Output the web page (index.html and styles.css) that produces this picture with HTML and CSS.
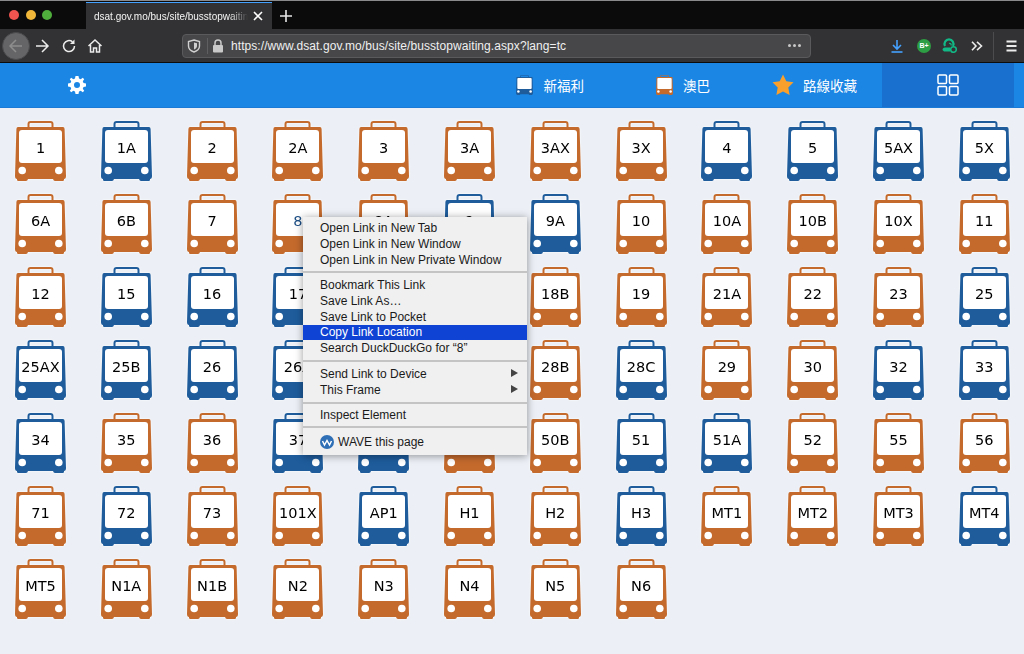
FILE: index.html
```html
<html>
<head>
<meta charset="utf-8">
<link rel="stylesheet" href="styles.css">
</head>
<body>
<svg class="defs" width="0" height="0">
  <symbol id="bus" viewBox="0 0 51 60">
    <rect x="13.500" y="1" width="24" height="7" rx="2" fill="none" stroke="currentColor" stroke-width="2"/>
    <path fill="currentColor" d="M3 6H48Q49.500 6 49.600 8L51 55Q51 58 49 58V59Q49 60 47.500 60H40Q38.500 60 38 58H13Q12.500 60 11 60H3.500Q2 60 2 59V58Q0 58 0 55L1.400 8Q1.500 6 3 6Z"/>
    <rect x="4" y="9" width="43" height="33" rx="3" fill="#fff"/>
    <circle cx="7.200" cy="49.500" r="3.800" fill="#fff"/>
    <circle cx="43.800" cy="49.500" r="3.800" fill="#fff"/>
  </symbol>
</svg>

<div class="tabstrip">
  <div class="lights"><i class="red"></i><i class="yellow"></i><i class="green"></i></div>
  <div class="tab">
    <span class="tabtitle">dsat.gov.mo/bus/site/busstopwaiting.aspx?lang=tc</span>
    <svg width="12" height="12" viewBox="0 0 12 12"><path d="M2 2L10 10M10 2L2 10" stroke="#fff" stroke-width="1.600" fill="none"/></svg>
  </div>
  <svg class="newtab" width="14" height="14" viewBox="0 0 14 14"><path d="M7 1V13M1 7H13" stroke="#e6e6e6" stroke-width="1.600"/></svg>
</div>

<div class="toolbar">
  <div class="backbtn">
    <svg width="16" height="16" viewBox="0 0 16 16"><path d="M14 8H2M8 2L2 8L8 14" stroke="#8d8d8d" stroke-width="1.500" fill="none"/></svg>
  </div>
  <svg class="tool fwd" width="16" height="16" viewBox="0 0 16 16"><path d="M2 8H14M8 2L14 8L8 14" stroke="#ececec" stroke-width="1.500" fill="none"/></svg>
  <svg class="tool reload" width="16" height="16" viewBox="0 0 16 16"><path d="M13.500 8A5.500 5.500 0 1 1 11.500 3.800" stroke="#ececec" stroke-width="1.500" fill="none"/><path d="M13.500 1.500V6H9Z" fill="#ececec"/></svg>
  <svg class="tool home" width="16" height="16" viewBox="0 0 16 16"><path d="M1.500 8L8 2L14.500 8M3.500 7V14H6.500V10H9.500V14H12.500V7" stroke="#ececec" stroke-width="1.500" fill="none"/></svg>
  <div class="urlbar">
    <svg width="14" height="14" viewBox="0 0 14 14"><path d="M7 1L12.500 2.500V7C12.500 10 10 12 7 13C4 12 1.500 10 1.500 7V2.500Z" stroke="#d0d0d0" stroke-width="1.400" fill="none"/><path d="M7 3.500L10 4.300V7C10 8.700 8.700 9.800 7 10.500Z" fill="#d0d0d0"/></svg>
    <span class="urlsep"></span>
    <svg width="12" height="14" viewBox="0 0 12 14"><path d="M3 6V4A3 3 0 0 1 9 4V6" stroke="#c9c9c9" stroke-width="1.500" fill="none"/><rect x="1" y="6" width="10" height="7.500" rx="1" fill="#c9c9c9"/></svg>
    <span class="url">https://www.dsat.gov.mo/bus/site/busstopwaiting.aspx?lang=tc</span>
    <span class="dots"><i></i><i></i><i></i></span>
  </div>
  <svg class="ext dl" width="12" height="14" viewBox="0 0 12 14"><path d="M6 1V10M2 6L6 10L10 6" stroke="#45a1ff" stroke-width="1.600" fill="none"/><path d="M0.500 13H11.500" stroke="#45a1ff" stroke-width="1.600"/></svg>
  <span class="ext badge">B+</span>
  <svg class="ext pocketish" width="15" height="15" viewBox="0 0 15 15"><path d="M3 8A4.500 4.500 0 1 1 11 8" stroke="#12b886" stroke-width="2.200" fill="none"/><path d="M0.500 12Q0.500 9.500 3 9.500H8V13.500H2Z" fill="#12b886"/><circle cx="11.500" cy="11.500" r="2.800" stroke="#12b886" stroke-width="1.500" fill="#323234"/><path d="M7 5.500A1.500 1.500 0 0 1 9 7.500" stroke="#12b886" stroke-width="1.200" fill="none"/></svg>
  <svg class="ext more" width="12" height="10" viewBox="0 0 12 10"><path d="M1 0.800L5 5L1 9.200M6 0.800L10.500 5L6 9.200" stroke="#ececec" stroke-width="1.600" fill="none"/></svg>
  <span class="toolsep"></span>
  <svg class="ext menuicon" width="11" height="12" viewBox="0 0 11 12"><path d="M0.500 1.500H10.500M0.500 6H10.500M0.500 10.500H10.500" stroke="#ececec" stroke-width="1.800"/></svg>
</div>

<div class="header">
  <svg class="gear" width="18" height="18" viewBox="0 0 18 18"><path fill="#fff" fill-rule="evenodd" d="M7.500 0H10.500L11 2.500L12.700 3.200L14.800 1.800L16.200 3.200L14.800 5.300L15.500 7L18 7.500V10.500L15.500 11L14.800 12.700L16.200 14.800L14.800 16.200L12.700 14.800L11 15.500L10.500 18H7.500L7 15.500L5.300 14.800L3.200 16.200L1.800 14.800L3.200 12.700L2.500 11L0 10.500V7.500L2.500 7L3.200 5.300L1.800 3.200L3.200 1.800L5.300 3.200L7 2.500ZM9 6A3 3 0 1 0 9 12A3 3 0 1 0 9 6Z"/></svg>
  <div class="nav">
    <a class="navitem navnew"><svg class="blue" width="17" height="20"><use href="#bus"/></svg>新福利</a>
    <a class="navitem navtcm"><svg class="orange" width="17" height="20"><use href="#bus"/></svg>澳巴</a>
    <a class="navitem navfav"><svg width="22" height="22" viewBox="0 0 22 22"><path fill="#f9a02c" d="M11 0.500L14.300 7.300L21.500 8.300L16.300 13.400L17.600 21L11 17.400L4.400 21L5.700 13.400L0.500 8.300L7.700 7.300Z"/></svg>路線收藏</a>
    <a class="navgrid"><svg width="22" height="22" viewBox="0 0 22 22"><g fill="none" stroke="#fff" stroke-width="1.500"><rect x="1" y="1" width="8.500" height="8.500" rx="1"/><rect x="12.500" y="1" width="8.500" height="8.500" rx="1"/><rect x="1" y="12.500" width="8.500" height="8.500" rx="1"/><rect x="12.500" y="12.500" width="8.500" height="8.500" rx="1"/></g></svg></a>
  </div>
</div>

<div class="routes">
  <a class="bus orange"><svg><use href="#bus"/></svg><span>1</span></a>
  <a class="bus blue"><svg><use href="#bus"/></svg><span>1A</span></a>
  <a class="bus orange"><svg><use href="#bus"/></svg><span>2</span></a>
  <a class="bus orange"><svg><use href="#bus"/></svg><span>2A</span></a>
  <a class="bus orange"><svg><use href="#bus"/></svg><span>3</span></a>
  <a class="bus orange"><svg><use href="#bus"/></svg><span>3A</span></a>
  <a class="bus orange"><svg><use href="#bus"/></svg><span>3AX</span></a>
  <a class="bus orange"><svg><use href="#bus"/></svg><span>3X</span></a>
  <a class="bus blue"><svg><use href="#bus"/></svg><span>4</span></a>
  <a class="bus blue"><svg><use href="#bus"/></svg><span>5</span></a>
  <a class="bus blue"><svg><use href="#bus"/></svg><span>5AX</span></a>
  <a class="bus blue"><svg><use href="#bus"/></svg><span>5X</span></a>

  <a class="bus orange"><svg><use href="#bus"/></svg><span>6A</span></a>
  <a class="bus orange"><svg><use href="#bus"/></svg><span>6B</span></a>
  <a class="bus orange"><svg><use href="#bus"/></svg><span>7</span></a>
  <a class="bus orange hover"><svg><use href="#bus"/></svg><span>8</span></a>
  <a class="bus orange"><svg><use href="#bus"/></svg><span>8A</span></a>
  <a class="bus blue"><svg><use href="#bus"/></svg><span>9</span></a>
  <a class="bus blue"><svg><use href="#bus"/></svg><span>9A</span></a>
  <a class="bus orange"><svg><use href="#bus"/></svg><span>10</span></a>
  <a class="bus orange"><svg><use href="#bus"/></svg><span>10A</span></a>
  <a class="bus orange"><svg><use href="#bus"/></svg><span>10B</span></a>
  <a class="bus orange"><svg><use href="#bus"/></svg><span>10X</span></a>
  <a class="bus orange"><svg><use href="#bus"/></svg><span>11</span></a>

  <a class="bus orange"><svg><use href="#bus"/></svg><span>12</span></a>
  <a class="bus blue"><svg><use href="#bus"/></svg><span>15</span></a>
  <a class="bus blue"><svg><use href="#bus"/></svg><span>16</span></a>
  <a class="bus blue"><svg><use href="#bus"/></svg><span>17</span></a>
  <a class="bus orange"><svg><use href="#bus"/></svg><span>18</span></a>
  <a class="bus orange"><svg><use href="#bus"/></svg><span>18A</span></a>
  <a class="bus orange"><svg><use href="#bus"/></svg><span>18B</span></a>
  <a class="bus orange"><svg><use href="#bus"/></svg><span>19</span></a>
  <a class="bus orange"><svg><use href="#bus"/></svg><span>21A</span></a>
  <a class="bus orange"><svg><use href="#bus"/></svg><span>22</span></a>
  <a class="bus orange"><svg><use href="#bus"/></svg><span>23</span></a>
  <a class="bus blue"><svg><use href="#bus"/></svg><span>25</span></a>

  <a class="bus blue"><svg><use href="#bus"/></svg><span>25AX</span></a>
  <a class="bus blue"><svg><use href="#bus"/></svg><span>25B</span></a>
  <a class="bus blue"><svg><use href="#bus"/></svg><span>26</span></a>
  <a class="bus blue"><svg><use href="#bus"/></svg><span>26A</span></a>
  <a class="bus orange"><svg><use href="#bus"/></svg><span>27</span></a>
  <a class="bus orange"><svg><use href="#bus"/></svg><span>28A</span></a>
  <a class="bus orange"><svg><use href="#bus"/></svg><span>28B</span></a>
  <a class="bus blue"><svg><use href="#bus"/></svg><span>28C</span></a>
  <a class="bus orange"><svg><use href="#bus"/></svg><span>29</span></a>
  <a class="bus orange"><svg><use href="#bus"/></svg><span>30</span></a>
  <a class="bus blue"><svg><use href="#bus"/></svg><span>32</span></a>
  <a class="bus blue"><svg><use href="#bus"/></svg><span>33</span></a>

  <a class="bus blue"><svg><use href="#bus"/></svg><span>34</span></a>
  <a class="bus orange"><svg><use href="#bus"/></svg><span>35</span></a>
  <a class="bus orange"><svg><use href="#bus"/></svg><span>36</span></a>
  <a class="bus blue"><svg><use href="#bus"/></svg><span>37</span></a>
  <a class="bus blue"><svg><use href="#bus"/></svg><span>39</span></a>
  <a class="bus orange"><svg><use href="#bus"/></svg><span>50A</span></a>
  <a class="bus orange"><svg><use href="#bus"/></svg><span>50B</span></a>
  <a class="bus blue"><svg><use href="#bus"/></svg><span>51</span></a>
  <a class="bus blue"><svg><use href="#bus"/></svg><span>51A</span></a>
  <a class="bus orange"><svg><use href="#bus"/></svg><span>52</span></a>
  <a class="bus orange"><svg><use href="#bus"/></svg><span>55</span></a>
  <a class="bus orange"><svg><use href="#bus"/></svg><span>56</span></a>

  <a class="bus orange"><svg><use href="#bus"/></svg><span>71</span></a>
  <a class="bus blue"><svg><use href="#bus"/></svg><span>72</span></a>
  <a class="bus orange"><svg><use href="#bus"/></svg><span>73</span></a>
  <a class="bus orange"><svg><use href="#bus"/></svg><span>101X</span></a>
  <a class="bus blue"><svg><use href="#bus"/></svg><span>AP1</span></a>
  <a class="bus orange"><svg><use href="#bus"/></svg><span>H1</span></a>
  <a class="bus orange"><svg><use href="#bus"/></svg><span>H2</span></a>
  <a class="bus blue"><svg><use href="#bus"/></svg><span>H3</span></a>
  <a class="bus orange"><svg><use href="#bus"/></svg><span>MT1</span></a>
  <a class="bus orange"><svg><use href="#bus"/></svg><span>MT2</span></a>
  <a class="bus orange"><svg><use href="#bus"/></svg><span>MT3</span></a>
  <a class="bus blue"><svg><use href="#bus"/></svg><span>MT4</span></a>

  <a class="bus orange"><svg><use href="#bus"/></svg><span>MT5</span></a>
  <a class="bus orange"><svg><use href="#bus"/></svg><span>N1A</span></a>
  <a class="bus orange"><svg><use href="#bus"/></svg><span>N1B</span></a>
  <a class="bus orange"><svg><use href="#bus"/></svg><span>N2</span></a>
  <a class="bus orange"><svg><use href="#bus"/></svg><span>N3</span></a>
  <a class="bus orange"><svg><use href="#bus"/></svg><span>N4</span></a>
  <a class="bus orange"><svg><use href="#bus"/></svg><span>N5</span></a>
  <a class="bus orange"><svg><use href="#bus"/></svg><span>N6</span></a>
</div>

<div class="ctxmenu">
  <div class="ctxitem">Open Link in New Tab</div>
  <div class="ctxitem">Open Link in New Window</div>
  <div class="ctxitem">Open Link in New Private Window</div>
  <div class="ctxsep"></div>
  <div class="ctxitem">Bookmark This Link</div>
  <div class="ctxitem">Save Link As…</div>
  <div class="ctxitem">Save Link to Pocket</div>
  <div class="ctxitem selected">Copy Link Location</div>
  <div class="ctxitem">Search DuckDuckGo for “8”</div>
  <div class="ctxsep sepwide"></div>
  <div class="ctxitem sub">Send Link to Device</div>
  <div class="ctxitem sub">This Frame</div>
  <div class="ctxsep sepnarrow"></div>
  <div class="ctxitem">Inspect Element</div>
  <div class="ctxsep"></div>
  <div class="ctxitem wave">
    <svg width="14" height="14" viewBox="0 0 14 14"><circle cx="7" cy="7" r="7" fill="#2f6fb5"/><path d="M2.500 6L4.500 10L7 5.500L9.500 10L11.500 6" stroke="#fff" stroke-width="1.500" fill="none"/></svg>
    WAVE this page
  </div>
</div>
</body></html>
```

FILE: styles.css
```css
html, body {
  margin: 0;
  height: 654px;
  overflow: hidden;
}
body {
  background-color: #ecf0f6;
  font-family: "Liberation Sans", Arial, sans-serif;
  position: relative;
}
.defs { display: block; }

/* browser chrome */
.tabstrip {
  display: flex;
  align-items: center;
  height: 27px;
  padding-top: 2px;
  background-color: #0b0b0c;
  box-shadow: inset 0 1px 0 #8a8a8c;
}
.lights {
  display: flex;
  gap: 6.500px;
  width: 86px;
  padding-left: 9px;
  box-sizing: border-box;
  margin-top: -1px;
}
.lights i {
  width: 10px;
  height: 10px;
  border-radius: 50%;
}
.red { background-color: #f0544f; }
.yellow { background-color: #f0b73a; }
.green { background-color: #4fae3c; }
.tab {
  display: flex;
  align-items: center;
  width: 186px;
  height: 27px;
  margin-top: -1px;
  padding: 1px 8px 0 8px;
  box-sizing: border-box;
  background-color: #323234;
  border-top: 1px solid #45a1ff;
  color: #f4f4f4;
  font-size: 10px;
  gap: 4px;
}
.tabtitle {
  flex: 1;
  overflow: hidden;
  white-space: nowrap;
  -webkit-mask-image: linear-gradient(to right, #000 88%, transparent);
}
.newtab { margin-left: 7px; }

.toolbar {
  display: flex;
  align-items: center;
  height: 33px;
  background-color: #323234;
  border-bottom: 1px solid #0c0c0d;
}
.backbtn {
  display: flex;
  align-items: center;
  justify-content: center;
  width: 26px;
  height: 26px;
  margin-left: 2px;
  border-radius: 50%;
  background-color: #656567;
  border: 1px solid #4a4a4c;
}
.tool { flex: none; }
.fwd { margin-left: 4px; }
.reload { margin-left: 11px; }
.home { margin-left: 10px; }
.urlbar {
  display: flex;
  align-items: center;
  width: 629px;
  height: 24px;
  margin-left: 79px;
  padding: 0 9px 0 4px;
  box-sizing: border-box;
  background-color: #474749;
  border: 1px solid #5a5a5c;
  border-radius: 4px;
}
.urlsep {
  width: 1px;
  height: 16px;
  margin: 0 4px 0 6px;
  background-color: #5f5f61;
}
.url {
  flex: 1;
  margin-left: 7px;
  color: #f0f0f0;
  font-size: 12px;
  letter-spacing: 0.070px;
  white-space: nowrap;
}
.dots { display: flex; gap: 2px; }
.dots i {
  width: 3px;
  height: 3px;
  border-radius: 50%;
  background-color: #c8c8c8;
}
.ext { flex: none; margin-left: 12px; }
.dl { margin-left: 80px; }
.badge {
  width: 14px;
  height: 14px;
  margin-left: 14px;
  border-radius: 50%;
  background-color: #2e9e44;
  color: #fff;
  font-size: 7px;
  font-weight: bold;
  line-height: 14px;
  text-align: center;
}
.pocketish { margin-left: 11px; }
.more { margin-left: 14px; }
.toolsep {
  width: 1px;
  height: 28px;
  margin-left: 10px;
  background-color: #4c4c4e;
}
.menuicon { margin-left: 12px; }

/* site header */
.header {
  display: flex;
  align-items: center;
  height: 44px;
  background-color: #1b86e4;
  border-bottom: 1px solid #1a7ad6;
}
.gear { margin-left: 68px; }
.nav {
  display: flex;
  align-items: center;
  height: 100%;
  margin-left: auto;
  margin-right: 10px;
}
.navitem {
  display: flex;
  align-items: center;
  color: #fff;
  font-family: "Noto Sans CJK TC", sans-serif;
  font-size: 13.500px;
}
.navitem svg { margin-right: 11px; }
.navtcm svg { margin-right: 10px; }
.navfav svg { margin-right: 9px; }
.navtcm { margin-left: 72px; }
.navfav { margin-left: 62px; }
.navgrid {
  display: flex;
  align-items: center;
  justify-content: center;
  width: 132px;
  height: 100%;
  margin-left: 25px;
  background-color: #1a70cf;
}

/* route grid */
.routes {
  display: grid;
  grid-template-columns: repeat(12, 51px);
  grid-auto-rows: 60px;
  column-gap: 34.800px;
  row-gap: 13px;
  padding: 13px 0 0 15px;
}
.bus {
  display: grid;
  filter: drop-shadow(0 0 1px #fff);
}
.bus svg, .bus span { grid-area: 1 / 1; }
.bus svg { width: 51px; height: 60px; }
.bus span {
  align-self: start;
  margin-top: 16px;
  text-align: center;
  color: #000;
  font-family: "DejaVu Sans", Verdana, sans-serif;
  font-size: 14.500px;
  line-height: 22px;
}
.hover span { color: #1d4f85; }
.orange { color: #c46a2d; }
.blue { color: #1e5c9c; }

/* context menu */
.ctxmenu {
  position: absolute;
  left: 303px;
  top: 217px;
  width: 224px;
  height: 238px;
  padding-top: 3.400px;
  box-sizing: border-box;
  background-color: #f0f0f0;
  box-shadow: 0 1px 8px rgba(0, 0, 0, 0.4);
  color: #1a1a1a;
  font-size: 12px;
}
.ctxitem {
  display: flex;
  align-items: center;
  height: 15.700px;
  padding: 0 0 0 17px;
  white-space: nowrap;
}
.ctxsep {
  height: 2px;
  margin: 4px 0;
  background-color: #c4c4c4;
}
.sepwide { margin-bottom: 4.500px; }
.sepnarrow { margin-bottom: 3px; }
.selected {
  background-color: #0f43d4;
  color: #fff;
}
.sub { position: relative; }
.sub::after {
  content: "";
  position: absolute;
  right: 9px;
  top: 3px;
  border-left: 7px solid #444;
  border-top: 4px solid transparent;
  border-bottom: 4px solid transparent;
}
.wave { gap: 4px; margin-top: 6px; }
```
